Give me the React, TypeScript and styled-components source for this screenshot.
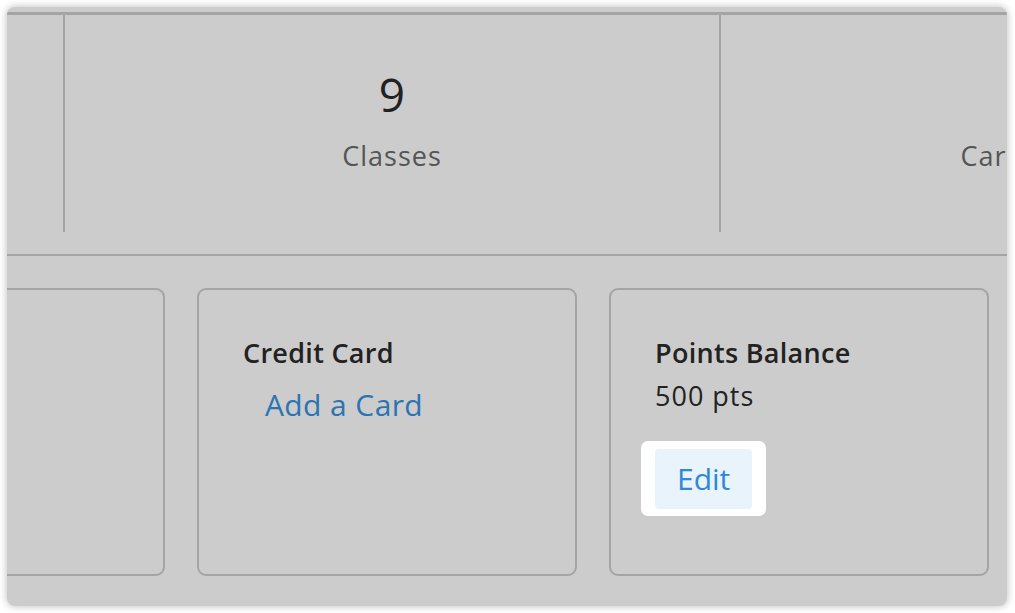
import styled, { createGlobalStyle } from 'styled-components'

const GlobalStyle = createGlobalStyle`
  html, body {
    margin: 0;
    padding: 0;
    background: #ffffff;
  }
  body {
    padding: 7px;
    font-family: "Open Sans", "Liberation Sans", sans-serif;
  }
  * {
    box-sizing: border-box;
  }
`

const Panel = styled.div`
  width: 1000px;
  height: 599px;
  background: #cccccc;
  border-radius: 8px;
  box-shadow: 0 0 7px 1px rgba(0, 0, 0, 0.22);
  overflow: hidden;
  padding-top: 5px;
`

const StatsSection = styled.section`
  border-top: 3px solid #a4a4a4;
`

const StatsTrack = styled.div`
  display: flex;
  margin-left: -600px;
`

const StatCell = styled.div`
  flex: 0 0 656px;
  height: 217px;
  border-left: 2px solid #a4a4a4;
  display: flex;
  flex-direction: column;
  align-items: center;
  padding-top: 56px;
`

const StatNumber = styled.div`
  font-size: 46px;
  line-height: 46px;
  color: #222222;
`

const StatLabel = styled.div`
  margin-top: 25px;
  font-size: 27px;
  line-height: 27px;
  letter-spacing: 1px;
  color: #555555;
  white-space: nowrap;
`

const CardsSection = styled.section`
  margin-top: 22px;
  border-top: 2px solid #a4a4a4;
  padding-top: 32px;
`

const CardsTrack = styled.div`
  display: flex;
  gap: 32px;
  margin-left: -222px;
`

const Card = styled.div`
  flex: 0 0 380px;
  height: 288px;
  border: 2px solid #a4a4a4;
  border-radius: 9px;
  padding: 47px 44px 0;
  display: flex;
  flex-direction: column;
  align-items: flex-start;
`

const CardTitle = styled.div`
  font-size: 27px;
  line-height: 32px;
  font-weight: 600;
  letter-spacing: 0.3px;
  color: #222222;
`

const CardValue = styled.div`
  margin-top: 11px;
  font-size: 27px;
  line-height: 32px;
  letter-spacing: 1px;
  color: #222222;
`

const Spotlight = styled.div`
  margin: 29px 0 0 -14px;
  padding: 8px 14px 7px;
  background: #ffffff;
  border-radius: 7px;
`

const ActionButton = styled.button<{ $variant: 'link' | 'soft' }>`
  display: flex;
  align-items: center;
  height: 60px;
  padding: 0 22px;
  border: none;
  border-radius: 4px;
  font-family: inherit;
  font-size: 30px;
  line-height: 30px;
  cursor: pointer;
  letter-spacing: ${(p) => (p.$variant === 'soft' ? '0' : '0.4px')};
  background: ${(p) => (p.$variant === 'soft' ? '#e8f3fb' : 'transparent')};
  color: ${(p) => (p.$variant === 'soft' ? '#2f88d6' : '#2b74b3')};
  margin-top: ${(p) => (p.$variant === 'link' ? '6px' : '0')};
`

const stats = [
  { value: '12', label: 'Visits' },
  { value: '9', label: 'Classes' },
  { value: '2', label: 'Cards on File' },
]

export default function App() {
  return (
    <>
      <GlobalStyle />
      <Panel>
        <StatsSection>
          <StatsTrack>
            {stats.map((s) => (
              <StatCell key={s.label}>
                <StatNumber>{s.value}</StatNumber>
                <StatLabel>{s.label}</StatLabel>
              </StatCell>
            ))}
          </StatsTrack>
        </StatsSection>
        <CardsSection>
          <CardsTrack>
            <Card>
              <CardTitle>Membership</CardTitle>
              <CardValue>Active</CardValue>
            </Card>
            <Card>
              <CardTitle>Credit Card</CardTitle>
              <ActionButton $variant="link">Add a Card</ActionButton>
            </Card>
            <Card>
              <CardTitle>Points Balance</CardTitle>
              <CardValue>500 pts</CardValue>
              <Spotlight>
                <ActionButton $variant="soft">Edit</ActionButton>
              </Spotlight>
            </Card>
          </CardsTrack>
        </CardsSection>
      </Panel>
    </>
  )
}
